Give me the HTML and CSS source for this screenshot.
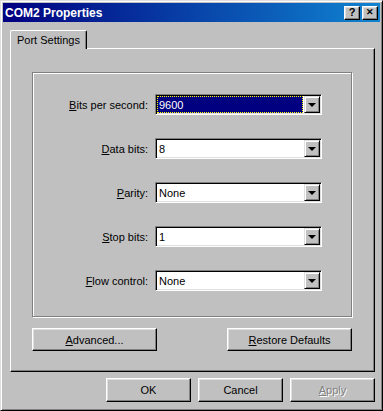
FILE: index.html
```html
<!DOCTYPE html>
<html lang="en">
<head>
  <meta charset="UTF-8">
  <meta name="viewport" content="width=device-width, initial-scale=1.0">
  <title>COM2 Properties</title>
  <link rel="stylesheet" href="styles.css">
</head>
<body>
  <div class="window">
    <div class="titlebar">
      <span class="title">COM2 Properties</span>
      <div class="title-buttons">
        <button class="title-btn">?</button>
        <button class="title-btn close">&#x2715;</button>
      </div>
    </div>

    <div class="content">
      <div class="tabs">
        <div class="tab active">Port Settings</div>
      </div>

      <div class="tab-panel">
        <div class="groupbox">
          <div class="field-grid">
            <label class="field-label"><u>B</u>its per second:</label>
            <div class="combo">
              <span class="combo-value selected">9600</span>
              <span class="combo-arrow"></span>
            </div>

            <label class="field-label"><u>D</u>ata bits:</label>
            <div class="combo">
              <span class="combo-value">8</span>
              <span class="combo-arrow"></span>
            </div>

            <label class="field-label"><u>P</u>arity:</label>
            <div class="combo">
              <span class="combo-value">None</span>
              <span class="combo-arrow"></span>
            </div>

            <label class="field-label"><u>S</u>top bits:</label>
            <div class="combo">
              <span class="combo-value">1</span>
              <span class="combo-arrow"></span>
            </div>

            <label class="field-label"><u>F</u>low control:</label>
            <div class="combo">
              <span class="combo-value">None</span>
              <span class="combo-arrow"></span>
            </div>
          </div>
        </div>

        <div class="panel-buttons">
          <button class="btn wide"><u>A</u>dvanced...</button>
          <button class="btn wide"><u>R</u>estore Defaults</button>
        </div>
      </div>

      <div class="dialog-buttons">
        <button class="btn">OK</button>
        <button class="btn">Cancel</button>
        <button class="btn" disabled><u>A</u>pply</button>
      </div>
    </div>
  </div>
</body>
</html>
```

FILE: styles.css
```css
body {
  margin: 0;
  padding: 0;
  background: #c0c0c0;
  font-family: "Liberation Sans", Arial, sans-serif;
  font-size: 11px;
  color: #000;
}

.window {
  width: 383px;
  height: 411px;
  box-sizing: border-box;
  background: #c0c0c0;
  border: 1px solid;
  border-color: #dfdfdf #000 #000 #dfdfdf;
  box-shadow: inset 1px 1px #fff, inset -1px -1px #808080;
  padding: 2px;
}

.titlebar {
  height: 19px;
  display: flex;
  align-items: center;
  justify-content: space-between;
  background: linear-gradient(to right, #000080, #1084d0);
  color: #fff;
  padding: 0 2px 0 2px;
}

.title {
  font-weight: bold;
  font-size: 12px;
  letter-spacing: 0;
}

.title-buttons {
  display: flex;
  gap: 2px;
}

.title-btn {
  width: 16px;
  height: 14px;
  box-sizing: border-box;
  padding: 0;
  background: #c0c0c0;
  border: 1px solid;
  border-color: #fff #000 #000 #fff;
  box-shadow: inset -1px -1px #808080, inset 1px 1px #dfdfdf;
  font-family: "Liberation Sans", Arial, sans-serif;
  font-size: 11px;
  font-weight: bold;
  line-height: 11px;
  color: #000;
}

.title-btn.close {
  font-size: 9px;
}

.content {
  padding: 8px 5px 0 7px;
}

.tabs {
  display: flex;
  position: relative;
  z-index: 1;
  margin-bottom: -1px;
}

.tab {
  height: 19px;
  box-sizing: border-box;
  padding: 3px 6px 0 6px;
  background: #c0c0c0;
  border-top: 1px solid #fff;
  border-left: 1px solid #fff;
  border-right: 1px solid #000;
  box-shadow: inset -1px 0 #808080;
  border-radius: 2px 2px 0 0;
  width: 77px;
}

.tab-panel {
  border: 1px solid;
  border-color: #fff #000 #000 #fff;
  box-shadow: inset -1px -1px #808080;
  padding: 23px 0 20px 21px;
}

.groupbox {
  width: 320px;
  height: 245px;
  box-sizing: border-box;
  border: 1px solid #808080;
  box-shadow: inset 1px 1px #fff, 1px 1px #fff;
}

.field-grid {
  display: grid;
  grid-template-columns: 115px 167px;
  grid-auto-rows: 21px;
  column-gap: 7px;
  row-gap: 23px;
  padding-top: 21px;
}

.field-label {
  display: flex;
  align-items: center;
  justify-content: flex-end;
}

.combo {
  display: flex;
  box-sizing: border-box;
  height: 21px;
  padding: 1px;
  background: #fff;
  border: 1px solid;
  border-color: #808080 #fff #fff #808080;
  box-shadow: inset 1px 1px #000, inset -1px -1px #dfdfdf;
}

.combo-value {
  flex: 1;
  display: flex;
  align-items: center;
  padding-left: 2px;
  margin-right: 1px;
}

.combo-value.selected {
  background: #000080;
  color: #fff;
  outline: 1px dotted #ffff00;
  outline-offset: -1px;
}

.combo-arrow {
  width: 16px;
  height: 17px;
  box-sizing: border-box;
  background: #c0c0c0;
  border: 1px solid;
  border-color: #dfdfdf #000 #000 #dfdfdf;
  box-shadow: inset 1px 1px #fff, inset -1px -1px #808080;
  display: flex;
  align-items: center;
  justify-content: center;
}

.combo-arrow::after {
  content: "";
  width: 0;
  height: 0;
  border-left: 4px solid transparent;
  border-right: 4px solid transparent;
  border-top: 4px solid #000;
  margin-left: -1px;
  margin-top: 1px;
}

.panel-buttons {
  width: 320px;
  display: flex;
  justify-content: space-between;
  margin-top: 11px;
}

.btn {
  width: 85px;
  height: 24px;
  box-sizing: border-box;
  padding: 0;
  background: #c0c0c0;
  border: 1px solid;
  border-color: #fff #000 #000 #fff;
  box-shadow: inset -1px -1px #808080, inset 1px 1px #dfdfdf;
  font-family: "Liberation Sans", Arial, sans-serif;
  font-size: 11px;
  color: #000;
}

.btn.wide {
  width: 125px;
  height: 23px;
}

.btn:disabled {
  color: #808080;
  text-shadow: 1px 1px #fff;
}

.dialog-buttons {
  display: flex;
  justify-content: flex-end;
  gap: 7px;
  margin-top: 6px;
}
```
